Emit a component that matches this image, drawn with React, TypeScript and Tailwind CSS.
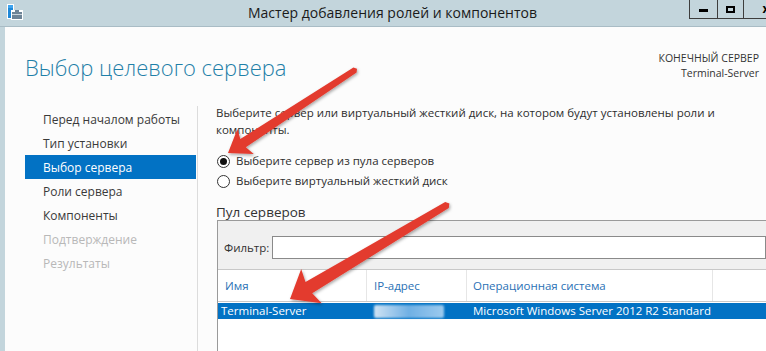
import React from "react";

type P = [number, number];

function arrowPoints(s: P, t: P, L: number, W: number, wh: number, ws: number): string {
  const dx = s[0] - t[0];
  const dy = s[1] - t[1];
  const len = Math.hypot(dx, dy);
  const u: P = [dx / len, dy / len];
  const n: P = [-u[1], u[0]];
  const base: P = [t[0] + u[0] * L, t[1] + u[1] * L];
  const pts: P[] = [
    t,
    [base[0] + n[0] * W, base[1] + n[1] * W],
    [base[0] + n[0] * wh - u[0] * 3, base[1] + n[1] * wh - u[1] * 3],
    [s[0] + n[0] * ws, s[1] + n[1] * ws],
    [s[0] + u[0] * ws * 0.8, s[1] + u[1] * ws * 0.8],
    [s[0] - n[0] * ws, s[1] - n[1] * ws],
    [base[0] - n[0] * wh - u[0] * 3, base[1] - n[1] * wh - u[1] * 3],
    [base[0] - n[0] * W, base[1] - n[1] * W],
  ];
  return pts.map((p) => `${p[0].toFixed(1)},${p[1].toFixed(1)}`).join(" ");
}

const navItems: { label: string; state: "normal" | "active" | "disabled" }[] = [
  { label: "Перед началом работы", state: "normal" },
  { label: "Тип установки", state: "normal" },
  { label: "Выбор сервера", state: "active" },
  { label: "Роли сервера", state: "normal" },
  { label: "Компоненты", state: "normal" },
  { label: "Подтверждение", state: "disabled" },
  { label: "Результаты", state: "disabled" },
];

export default function App() {
  return (
    <div className="relative w-[766px] h-[351px] overflow-hidden bg-[#c3d5dc] font-['Open_Sans','Noto_Sans',sans-serif] text-[#333]">
      {/* Title bar */}
      <div className="flex h-[27px] w-[788px] items-start border-b border-[#a9bcc5]">
        <div className="mt-[4px] ml-[6px] h-[17px] w-[17px]">
          <svg width="17" height="17" viewBox="0 0 17 17">
            <rect x="1" y="0" width="7" height="15" fill="#ffffff" />
            <rect x="2" y="1" width="5" height="13" fill="#1e88d8" />
            <rect x="2" y="1" width="5" height="3" fill="#3fa4ee" />
            <rect x="5" y="6" width="12" height="10" fill="#ffffff" />
            <rect x="6" y="8" width="10" height="7" fill="#6d8396" />
            <rect x="9" y="6" width="4" height="2" fill="#6d8396" />
            <rect x="6" y="10" width="10" height="1" fill="#c8d3db" />
          </svg>
        </div>
        <div className="ml-[225px] mt-[3px] text-[14px] leading-[20px] text-[#1a1a1a] whitespace-nowrap">
          Мастер добавления ролей и компонентов
        </div>
        <div className="ml-auto flex h-[19px] shrink-0 border-b border-l border-[#3d3d3d]">
          <div className="flex w-[28px] items-center justify-center border-r border-[#3d3d3d]">
            <div className="mt-[2px] h-[3px] w-[9px] bg-black" />
          </div>
          <div className="flex w-[26px] items-center justify-center border-r border-[#3d3d3d]">
            <div className="h-[7px] w-[9px] border-2 border-black" />
          </div>
          <div className="flex w-[44px] items-center justify-center text-[12px] font-bold leading-none text-black">
            x
          </div>
        </div>
      </div>

      {/* Body */}
      <div className="ml-[5px] h-[324px] bg-[#fcfcfc]">
        {/* Header */}
        <div className="flex h-[76px] items-start">
          <div className="ml-[20px] mt-[25px] text-[22px] font-light leading-[30px] text-[#1f80a8] whitespace-nowrap">
            Выбор целевого сервера
          </div>
          <div className="ml-auto mr-[7px] mt-[24px] text-right text-[10.5px] leading-[15px] text-[#333]">
            <div>КОНЕЧНЫЙ СЕРВЕР</div>
            <div>Terminal-Server</div>
          </div>
        </div>

        {/* Main */}
        <div className="flex h-[248px]">
          <div className="mt-[3px] w-[193px] shrink-0 border-r border-[#dcdcdc] pl-[20px] pr-[1px] pt-[1px]">
            {navItems.map((it) => (
              <div
                key={it.label}
                className={
                  it.state === "active"
                    ? "flex h-[24px] items-center bg-[#0272c4] pl-[18px] pt-[1px] text-[12px] text-white"
                    : it.state === "disabled"
                    ? "flex h-[24px] items-center pl-[18px] pt-[1px] text-[12px] text-[#b8b8b8]"
                    : "flex h-[24px] items-center pl-[18px] pt-[1px] text-[12px] text-[#3a3a3a]"
                }
              >
                {it.label}
              </div>
            ))}
          </div>

          <div className="min-w-0 flex-1 pl-[18px] text-[11.5px]">
            <p className="mt-[1px] w-[520px] leading-[17px] text-[#2e2e2e]">
              Выберите сервер или виртуальный жесткий диск, на котором будут установлены роли и компоненты.
            </p>
            <div className="mt-[13px] flex h-[20px] items-center text-[#2e2e2e]">
              <span className="ml-[1px] flex h-[13px] w-[13px] items-center justify-center rounded-full border border-[#333] bg-white">
                <span className="h-[7px] w-[7px] rounded-full bg-[#111]" />
              </span>
              <span className="ml-[6px]">Выберите сервер из пула серверов</span>
            </div>
            <div className="flex h-[20px] items-center text-[#2e2e2e]">
              <span className="ml-[1px] h-[13px] w-[13px] rounded-full border border-[#333] bg-white" />
              <span className="ml-[6px]">Выберите виртуальный жесткий диск</span>
            </div>
            <div className="mt-[13px] h-[16px] text-[13.5px] leading-[16px] text-[#333]">Пул серверов</div>

            <div className="ml-[1px] w-[600px] border-l border-t border-[#9a9a9a] bg-white">
              <div className="flex h-[48px] items-start bg-[#f0f0f0] pl-[6px] pt-[15px]">
                <span className="mt-[3px] leading-[17px]">Фильтр:</span>
                <div className="ml-[3px] h-[23px] w-[494px] border border-[#8a8a8a] bg-white" />
              </div>
              <div className="flex h-[33px] border-t border-[#c8c8c8] border-b border-b-[#c9c9c9] bg-white text-[#2a71b5]">
                <div className="flex w-[149px] items-center border-r border-[#e6e6e6] pl-[7px] pt-[1px]">Имя</div>
                <div className="flex w-[100px] items-center border-r border-[#e6e6e6] pl-[7px] pt-[1px]">IP-адрес</div>
                <div className="flex w-[246px] items-center border-r border-[#e6e6e6] pl-[6px] pt-[1px]">Операционная система</div>
                <div className="flex-1" />
              </div>
              <div className="mt-[1px] flex h-[16px] items-center bg-[#0272c4] leading-[16px] text-white">
                <div className="w-[153px] pl-[3px]">Terminal-Server</div>
                <div className="flex w-[100px] items-center">
                  <div className="ml-[3px] h-[13px] w-[70px] rounded-[2px] bg-gradient-to-r from-[#cfe3f3] via-[#6fb0e4] to-[#9ccaee] blur-[1px]" />
                </div>
                <div className="pl-[2px]">Microsoft Windows Server 2012 R2 Standard</div>
              </div>
              <div className="h-[40px] bg-white" />
            </div>
          </div>
        </div>
      </div>

      {/* Annotation arrows */}
      <svg className="pointer-events-none absolute left-0 top-0" width="766" height="351" viewBox="0 0 766 351">
        <defs>
          <filter id="sh" x="-20%" y="-20%" width="140%" height="140%">
            <feDropShadow dx="1" dy="1.5" stdDeviation="1.5" floodColor="#000" floodOpacity="0.35" />
          </filter>
        </defs>
        <polygon points={arrowPoints([355, 70], [228, 153], 21, 15, 5, 3)} fill="#e33b2f" filter="url(#sh)" />
        <polygon points={arrowPoints([447, 205], [290, 299], 25, 20, 6.5, 3.5)} fill="#e33b2f" filter="url(#sh)" />
      </svg>
    </div>
  );
}
